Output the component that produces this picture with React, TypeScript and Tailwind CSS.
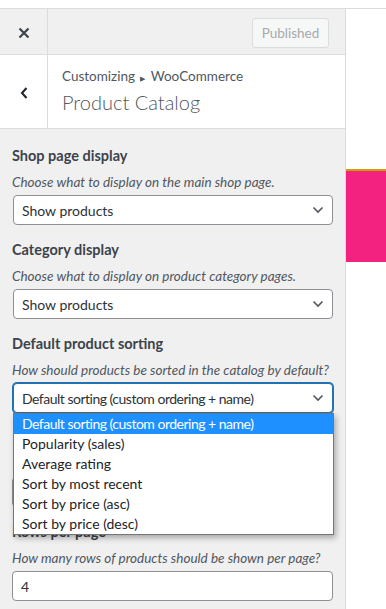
import React from "react";

const font = { fontFamily: 'Lato, "Noto Sans", sans-serif' };

function Chevron() {
  return (
    <svg width="12" height="8" viewBox="0 0 12 8" className="shrink-0">
      <path d="M1.5 1.5 L6 6 L10.5 1.5" fill="none" stroke="#50575e" strokeWidth="1.6" />
    </svg>
  );
}

function Field({
  label,
  desc,
  value,
  focused,
  input,
  hidden,
  tight,
}: {
  label: string;
  desc: string;
  value: string;
  focused?: boolean;
  input?: boolean;
  hidden?: boolean;
  tight?: boolean;
}) {
  return (
    <div className="mt-[15px] first:mt-0">
      <div className={`h-5 leading-5 text-[14.5px] font-bold text-[#3c434a] mb-[7px] ${hidden ? "invisible" : ""}`}>
        {label}
      </div>
      <div className={`leading-[18px] text-[13.5px] italic text-[#50575e] mb-[4px] ${hidden ? "invisible" : ""}`}>
        {desc}
      </div>
      <div
        className={`h-[30px] flex items-center justify-between pr-[8px] rounded-[4px] bg-white text-[14px] text-[#2c3338] border ${
          focused ? "border-[#2271b1] shadow-[0_0_0_1px_#2271b1]" : "border-[#8c8f94]"
        } ${input ? "pl-[8px]" : "ml-px pl-[8px]"}`}
      >
        <span className={`${hidden ? "invisible" : ""} ${tight ? "tracking-[-0.5px]" : ""}`}>{value}</span>
        {!input && <Chevron />}
      </div>
    </div>
  );
}

const options = [
  "Default sorting (custom ordering + name)",
  "Popularity (sales)",
  "Average rating",
  "Sort by most recent",
  "Sort by price (asc)",
  "Sort by price (desc)",
];

export default function App() {
  return (
    <div className="w-[386px] h-[609px] overflow-hidden bg-white" style={font}>
      <div className="h-[9px] border-b border-[#dcdcde] bg-white" />
      <div className="flex">
        <div className="w-[346px] shrink-0 h-[600px] bg-[#f0f0f1] border-r border-[#dcdcde]">
          {/* top bar */}
          <div className="h-[46px] flex border-b border-[#dcdcde]">
            <div className="w-[48px] flex items-center justify-center border-r border-[#dcdcde] pt-[2px]">
              <svg width="12" height="12" viewBox="0 0 12 12">
                <path d="M1.5 1.5 L10.5 10.5 M10.5 1.5 L1.5 10.5" stroke="#3c434a" strokeWidth="2.2" />
              </svg>
            </div>
            <div className="flex-1 flex items-center justify-end pr-[16px] pt-[3px]">
              <div className="h-[30px] w-[77px] flex items-center justify-center rounded-[3px] border border-[#dcdcde] bg-[#f6f7f7] text-[13.5px] text-[#a7aaad]">
                Published
              </div>
            </div>
          </div>
          {/* section title */}
          <div className="h-[74px] flex bg-white border-b border-[#dcdcde]">
            <div className="w-[48px] flex items-center justify-center border-r border-[#dcdcde] pt-[2px]">
              <svg width="10" height="14" viewBox="0 0 10 14">
                <path d="M7.5 2 L3 7 L7.5 12" fill="none" stroke="#1d2327" strokeWidth="2" />
              </svg>
            </div>
            <div className="flex-1 pl-[14px] pt-[12px]">
              <div className="text-[13.5px] leading-[18px] text-[#50575e]">
                Customizing <span className="text-[7px] align-middle mx-[2px]">▶</span> WooCommerce
              </div>
              <div className="text-[20px] leading-[28px] font-light text-[#50575e] mt-[1px]">Product Catalog</div>
            </div>
          </div>
          {/* controls */}
          <div className="relative px-3 pt-[17px]">
            <Field label="Shop page display" desc="Choose what to display on the main shop page." value="Show products" />
            <Field label="Category display" desc="Choose what to display on product category pages." value="Show products" />
            <Field
              label="Default product sorting"
              desc="How should products be sorted in the catalog by default?"
              value="Default sorting (custom ordering + name)"
              focused
              tight
            />
            <Field label="Products per row" desc="How many products should be shown per row?" value="4" input hidden />
            <Field label="Rows per page" desc="How many rows of products should be shown per page?" value="4" input />
            {/* open dropdown */}
            <div className="absolute left-[13px] top-[284px] w-[321px] bg-white border border-[#767676] shadow-[2px_3px_6px_rgba(0,0,0,0.3)]">
              {options.map((o, i) => (
                <div
                  key={o}
                  className={`h-[20px] leading-[20px] pl-[8px] text-[14px] ${
                    i === 0 ? "bg-[#1e90ff] text-white tracking-[-0.5px]" : "text-[#1d2327]"
                  }`}
                >
                  {o}
                </div>
              ))}
            </div>
          </div>
        </div>
        <div className="flex-1">
          <div className="mt-[160px] h-[2px] bg-[#c9a200]" />
          <div className="h-[91px] bg-[#f32180]" />
        </div>
      </div>
    </div>
  );
}
